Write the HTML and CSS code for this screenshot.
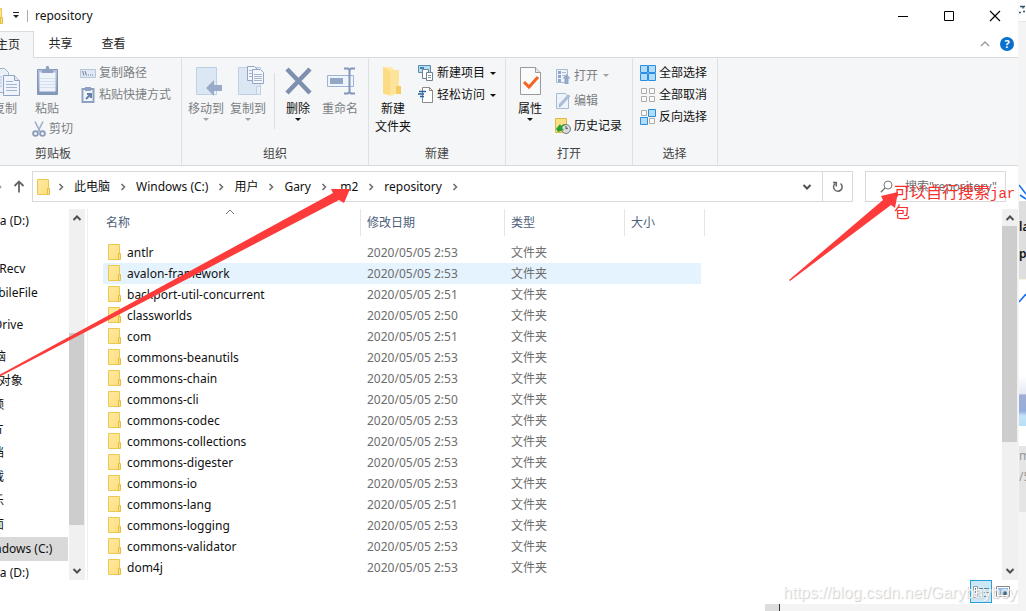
FILE: index.html
```html
<!DOCTYPE html>
<html lang="zh-CN">
<head>
<meta charset="utf-8">
<title>repository</title>
<link rel="stylesheet" href="styles.css">
</head>
<body>
<svg class="defs" aria-hidden="true">
  <linearGradient id="fold" x1="0" y1="0" x2="1" y2="1"><stop offset="0" stop-color="#ffe9a2"/><stop offset="1" stop-color="#fddf7d"/></linearGradient>
  <linearGradient id="steel" x1="0" y1="0" x2="0" y2="1"><stop offset="0" stop-color="#b5c3dc"/><stop offset="1" stop-color="#8296ba"/></linearGradient>
  <symbol id="folder" viewBox="0 0 14 16"><path d="M.5.5h11v15H.5z" fill="url(#fold)" stroke="#ecc850"/><path d="M10.500 9.500h2v6h-2z" fill="#fbe08a" stroke="#e5bd45"/></symbol>
  <symbol id="chev" viewBox="0 0 6 8"><path d="M1.500 1l3 3-3 3" fill="none" stroke="#707070" stroke-width="1.600"/></symbol>
  <symbol id="up" viewBox="0 0 10 8"><path d="M1.500 6L5 2.500 8.500 6" fill="none" stroke="#505050" stroke-width="2"/></symbol>
  <symbol id="down" viewBox="0 0 10 8"><path d="M1.500 2L5 5.500 8.500 2" fill="none" stroke="#505050" stroke-width="2"/></symbol>
  <symbol id="pages" viewBox="0 0 32 32"><path d="M3.500 2.500h12l4 4v20h-16z" fill="#e9f0f9" stroke="#9fb0cc"/><path d="M5 11h8m-8 3h8m-8 3h8m-8 3h8" stroke="#aebdd6"/><path d="M14.500 9.500h11l5 5v15h-16z" fill="#f1f5fb" stroke="#8fa3c4"/><path d="M25.500 9.500v5h5" fill="#dce5f2" stroke="#8fa3c4"/><path d="M17 15.500h7m-7 3h11m-11 3h11m-11 3h11" stroke="#a3b4d0"/></symbol>
</svg>
<div class="desktop">
  <main class="window">
    <header class="titlebar">
      <svg class="title-folder" width="14" height="16"><use href="#folder"/></svg>
      <button class="plain quick" aria-label="自定义快速访问工具栏"><svg width="8" height="7"><path d="M1 .5h6" stroke="#222"/><path d="M1 3h6L4 6z" fill="#222"/></svg></button>
      <h1 class="title">repository</h1>
      <div class="controls">
        <button class="plain" aria-label="最小化"><svg width="12" height="12"><path d="M1 6.500h10" stroke="#000"/></svg></button>
        <button class="plain" aria-label="最大化"><svg width="12" height="12"><path d="M1.500 1.500h9v9h-9z" fill="none" stroke="#000"/></svg></button>
        <button class="plain" aria-label="关闭"><svg width="12" height="12"><path d="M1 1l10 10M11 1L1 11" stroke="#000" stroke-width="1.200"/></svg></button>
      </div>
    </header>
    <nav class="tabs">
      <button class="tab active">主页</button>
      <button class="tab">共享</button>
      <button class="tab">查看</button>
      <div class="tab-tools">
        <button class="plain" aria-label="折叠功能区"><svg width="10" height="8"><path d="M1 6l4-4 4 4" fill="none" stroke="#9a9a9a" stroke-width="1.300"/></svg></button>
        <button class="plain help" aria-label="帮助">?</button>
      </div>
    </nav>
    <section class="ribbon">
      <div class="group clipboard">
        <div class="group-body">
          <button class="big off"><svg width="32" height="32"><use href="#pages"/></svg><span>复制</span></button>
          <div class="clip-right">
            <div class="clip-top">
              <button class="big off"><svg width="32" height="32"><path d="M6.500 3.500h20v25h-20z" fill="url(#steel)" stroke="#8496b8"/><path d="M8.500 6.500h16v19h-16z" fill="#eef3fa"/><path d="M9 12.500h15m-15 3h15m-15 3h15m-15 3h15" stroke="#d5dfed"/><path d="M11 3h3.500l1-3h2l1 3H22v4H11z" fill="#8fa1c0"/></svg><span>粘贴</span></button>
              <div class="stack">
                <button class="small off"><svg width="16" height="16"><path d="M.5 4.500h15v8H.5z" fill="#dfe8f4" stroke="#b7c5da"/><path d="M2.500 6l1.500 4.500M5 6l1.500 4.500M8 10h1m1 0h1m1 0h1" stroke="#6c7f9f"/></svg>复制路径</button>
                <button class="small off"><svg width="16" height="16"><path d="M2.500 2h11v13h-11z" fill="#f2f6fb" stroke="#8fa1c0" stroke-width="2"/><path d="M5 0h6v4H5z" fill="#8fa1c0"/><path d="M7 7h4v4M11 7l-5 5" stroke="#6680aa" stroke-width="2" fill="none"/></svg>粘贴快捷方式</button>
              </div>
            </div>
            <button class="small off cut"><svg width="16" height="16"><path d="M4 .5l5 10M12 .5l-5 10" stroke="#9cadc8" stroke-width="1.600"/><circle cx="4.500" cy="12.500" r="2.400" fill="none" stroke="#8b9cba" stroke-width="1.800"/><circle cx="11.500" cy="12.500" r="2.400" fill="none" stroke="#8b9cba" stroke-width="1.800"/></svg>剪切</button>
          </div>
        </div>
        <div class="group-name">剪贴板</div>
      </div>
      <div class="group organize">
        <div class="group-body">
          <button class="big off"><svg width="32" height="32"><path d="M6.500 1.500h20v27h-20z" fill="#dce7f4" stroke="#c0d0e4"/><path d="M22.500 22.500h4v6h-4z" fill="#e8eff8" stroke="#c0d0e4"/><path d="M16 22l8-8v5h8v6h-8v5z" fill="#9aabc9"/></svg><span>移动到</span><i class="drop"></i></button>
          <button class="big off"><svg width="32" height="32"><path d="M6.500 1.500h22v27h-22z" fill="#dce7f4" stroke="#c0d0e4"/><path d="M24.500 20.500h4v8h-4z" fill="#e8eff8" stroke="#c0d0e4"/><path d="M15.500.500h7l3 3v11h-10z" fill="#f3f7fc" stroke="#93a6c6"/><path d="M20.500 3.500h8l3 3v11h-11z" fill="#f3f7fc" stroke="#93a6c6"/><path d="M22 8.500h8m-8 2h8m-8 2h8m-8 2h8M17 4.500h3m-3 3h3m-3 3h3" stroke="#a7b6d0"/></svg><span>复制到</span><i class="drop"></i></button>
          <div class="rule"></div>
          <button class="big"><svg width="32" height="32"><path d="M5 3l23 24M28 3L5 27" stroke="#7e8fb0" stroke-width="4.500"/></svg><span>删除</span><i class="drop"></i></button>
          <button class="big off"><svg width="32" height="32"><path d="M3.500 9.500h26v11h-26z" fill="#eef4fb" stroke="#9fb3d2"/><path d="M6 12h13v6H6z" fill="#94a6c6"/><path d="M20 2.500h4l1.500 1.500L27 2.500h4M20 27.500h4l1.500-1.500 1.500 1.500h4M25.500 4v22" stroke="#8496ba" stroke-width="2" fill="none"/></svg><span>重命名</span></button>
        </div>
        <div class="group-name">组织</div>
      </div>
      <div class="group create">
        <div class="group-body">
          <button class="big"><svg width="32" height="32"><path d="M6 1h9l2 3v25l-3 1-8-2z" fill="#ffe9a6"/><path d="M6 1l7 4v24l-7-2z" fill="#fbdc84"/><path d="M13 4h9v24h-9z" fill="#fde49a"/><path d="M19 20h5v8h-5z" fill="#f6cd62"/></svg><span>新建<br>文件夹</span></button>
          <div class="stack">
            <button class="small"><svg width="16" height="16"><path d="M.5.500h12v7H.5z" fill="#b8dcf2" stroke="#5c8cae"/><path d="M2 2h4v2H2z" fill="#3e86b8"/><path d="M4.500 4.500h6v9h-6z" fill="#fff" stroke="#70818f"/><path d="M8.500 7.500h6v8h-6z" fill="#fff" stroke="#70818f"/><path d="M10 10.500h3m-3 2h3" stroke="#899"/></svg>新建项目<i class="drop"></i></button>
            <button class="small"><svg width="16" height="16"><path d="M4.500.5h7l3 3v12h-10z" fill="#fff" stroke="#8a8a8a"/><path d="M11.500.5v3h3" fill="none" stroke="#8a8a8a"/><path d="M1 4.500h7M0 7h6M2 9.500h4" stroke="#24639c" stroke-width="1.300"/></svg>轻松访问<i class="drop"></i></button>
          </div>
        </div>
        <div class="group-name">新建</div>
      </div>
      <div class="group open">
        <div class="group-body">
          <button class="big"><svg width="32" height="32"><path d="M6.500 1.500h15l5 5v22h-20z" fill="#fbfbfb" stroke="#9a9a9a"/><path d="M21.500 1.500v5h5" fill="#e8e8e8" stroke="#9a9a9a"/><path d="M10 16l5 5 9-10" fill="none" stroke="#f26522" stroke-width="3"/></svg><span>属性</span><i class="drop"></i></button>
          <div class="stack">
            <button class="small off"><svg width="16" height="16"><path d="M1.500 1.500h11v13h-11z" fill="#edf3fa" stroke="#a9b9d2"/><path d="M3 3h3v3H3zM3 7h3v3H3zM3 11h3v3H3z" fill="#91a5c7"/><path d="M7 4.500h4M7 7.500h3" stroke="#a9b9d2"/><path d="M11.500 6l4 4.500h-2V16h-4v-5.500H7.500z" fill="#95a8c9"/></svg>打开<i class="drop"></i></button>
            <button class="small off"><svg width="16" height="16"><path d="M1.500.5h9l3 3v12h-12z" fill="#edf3fa" stroke="#a9b9d2"/><path d="M15 3L6 13l-2 1 .5-3L13 2z" fill="#afc0db" stroke="#93a6c5" stroke-width=".6"/></svg>编辑</button>
            <button class="small"><svg width="16" height="16"><path d="M.5.500h11v14H.5z" fill="#fbe08a" stroke="#dfb944"/><circle cx="11" cy="11" r="4.500" fill="#d9dcdc" stroke="#777"/><path d="M11 8v3l2-1" stroke="#555" fill="none"/><path d="M1 11l4-5 1 2c2-2 4-2 5-1-3 0-4 2-4 3l2 2-6 2z" fill="#28a032"/></svg>历史记录</button>
          </div>
        </div>
        <div class="group-name">打开</div>
      </div>
      <div class="group select">
        <div class="group-body">
          <div class="stack">
            <button class="small"><svg width="16" height="16"><path d="M.5.500h7v7h-7zM8.500.500h7v7h-7zM.5 8.500h7v7h-7zM8.500 8.500h7v7h-7z" fill="#b2dcfa" stroke="#2b8fe0"/></svg>全部选择</button>
            <button class="small"><svg width="16" height="16"><path d="M1.500 1.500h5v5h-5zM9.500 1.500h5v5h-5zM1.500 9.500h5v5h-5zM9.500 9.500h5v5h-5z" fill="#fafafa" stroke="#adadad"/></svg>全部取消</button>
            <button class="small"><svg width="16" height="16"><path d="M1.500 1.500h5v5h-5zM9.500 9.500h5v5h-5z" fill="#fafafa" stroke="#adadad"/><path d="M8.500.500h7v7h-7zM.5 8.500h7v7h-7z" fill="#b2dcfa" stroke="#2b8fe0"/></svg>反向选择</button>
          </div>
        </div>
        <div class="group-name">选择</div>
      </div>
    </section>
    <section class="location">
      <svg width="3" height="8"><path d="M0 2.500l1 1.500-1 1.500" stroke="#888" fill="none"/></svg>
      <button class="plain go-up" aria-label="上移"><svg width="12" height="13"><path d="M6 12.500V2M1.500 6L6 1.500 10.500 6" fill="none" stroke="#666" stroke-width="1.800"/></svg></button>
      <div class="address">
        <svg width="14" height="16"><use href="#folder"/></svg>
        <div class="crumbs">
          <svg class="chev" width="6" height="8"><use href="#chev"/></svg>
          <a href="#pc">此电脑</a><svg class="chev" width="6" height="8"><use href="#chev"/></svg>
          <a href="#c">Windows (C:)</a><svg class="chev" width="6" height="8"><use href="#chev"/></svg>
          <a href="#users">用户</a><svg class="chev" width="6" height="8"><use href="#chev"/></svg>
          <a href="#gary">Gary</a><svg class="chev" width="6" height="8"><use href="#chev"/></svg>
          <a href="#m2">.m2</a><svg class="chev" width="6" height="8"><use href="#chev"/></svg>
          <a href="#repository">repository</a><svg class="chev" width="6" height="8"><use href="#chev"/></svg>
        </div>
        <button class="plain history" aria-label="以前的位置"><svg width="10" height="8"><use href="#down"/></svg></button>
        <button class="plain refresh" aria-label="刷新"><svg width="12" height="12"><path d="M8.500 2.500A4.300 4.300 0 1 1 3.500 2.300" fill="none" stroke="#666" stroke-width="1.500"/><path d="M1 1.500h3.300v4" fill="none" stroke="#666" stroke-width="1.500"/></svg></button>
      </div>
      <label class="search">
        <svg width="13" height="13"><circle cx="8" cy="5" r="4" fill="none" stroke="#777"/><path d="M5 8L.8 12.200" stroke="#777" stroke-width="1.300"/></svg>
        <input type="text" aria-label="搜索" placeholder="搜索&quot;repository&quot;">
      </label>
    </section>
    <section class="panes">
      <div class="tree-clip">
        <ul class="tree">
          <li class="sub">Data (D:)</li>
          <li class="empty"></li>
          <li class="sub">FileRecv</li>
          <li class="sub">MobileFile</li>
          <li class="root">OneDrive</li>
          <li class="root">此电脑</li>
          <li class="sub">3D 对象</li>
          <li class="sub">视频</li>
          <li class="sub">图片</li>
          <li class="sub">文档</li>
          <li class="sub">下载</li>
          <li class="sub">音乐</li>
          <li class="sub">桌面</li>
          <li class="sub current">Windows (C:)</li>
          <li class="sub">Data (D:)</li>
        </ul>
      </div>
      <div class="scroll tree-scroll">
        <svg width="10" height="8"><use href="#up"/></svg>
        <div class="track"><div class="thumb"></div></div>
        <svg width="10" height="8"><use href="#down"/></svg>
      </div>
      <div class="files">
        <table>
          <colgroup><col class="c-name"><col class="c-date"><col class="c-type"><col class="c-size"></colgroup>
          <thead><tr><th><svg class="sort" width="10" height="6"><path d="M1 5l4-4 4 4" fill="none" stroke="#777"/></svg>名称</th><th>修改日期</th><th>类型</th><th>大小</th></tr></thead>
          <tbody>
            <tr><td><svg width="14" height="16"><use href="#folder"/></svg>antlr</td><td>2020/05/05 2:53</td><td>文件夹</td><td></td></tr>
            <tr class="hover"><td><svg width="14" height="16"><use href="#folder"/></svg>avalon-framework</td><td>2020/05/05 2:53</td><td>文件夹</td><td></td></tr>
            <tr><td><svg width="14" height="16"><use href="#folder"/></svg>backport-util-concurrent</td><td>2020/05/05 2:51</td><td>文件夹</td><td></td></tr>
            <tr><td><svg width="14" height="16"><use href="#folder"/></svg>classworlds</td><td>2020/05/05 2:50</td><td>文件夹</td><td></td></tr>
            <tr><td><svg width="14" height="16"><use href="#folder"/></svg>com</td><td>2020/05/05 2:51</td><td>文件夹</td><td></td></tr>
            <tr><td><svg width="14" height="16"><use href="#folder"/></svg>commons-beanutils</td><td>2020/05/05 2:53</td><td>文件夹</td><td></td></tr>
            <tr><td><svg width="14" height="16"><use href="#folder"/></svg>commons-chain</td><td>2020/05/05 2:53</td><td>文件夹</td><td></td></tr>
            <tr><td><svg width="14" height="16"><use href="#folder"/></svg>commons-cli</td><td>2020/05/05 2:50</td><td>文件夹</td><td></td></tr>
            <tr><td><svg width="14" height="16"><use href="#folder"/></svg>commons-codec</td><td>2020/05/05 2:53</td><td>文件夹</td><td></td></tr>
            <tr><td><svg width="14" height="16"><use href="#folder"/></svg>commons-collections</td><td>2020/05/05 2:53</td><td>文件夹</td><td></td></tr>
            <tr><td><svg width="14" height="16"><use href="#folder"/></svg>commons-digester</td><td>2020/05/05 2:53</td><td>文件夹</td><td></td></tr>
            <tr><td><svg width="14" height="16"><use href="#folder"/></svg>commons-io</td><td>2020/05/05 2:53</td><td>文件夹</td><td></td></tr>
            <tr><td><svg width="14" height="16"><use href="#folder"/></svg>commons-lang</td><td>2020/05/05 2:51</td><td>文件夹</td><td></td></tr>
            <tr><td><svg width="14" height="16"><use href="#folder"/></svg>commons-logging</td><td>2020/05/05 2:53</td><td>文件夹</td><td></td></tr>
            <tr><td><svg width="14" height="16"><use href="#folder"/></svg>commons-validator</td><td>2020/05/05 2:53</td><td>文件夹</td><td></td></tr>
            <tr><td><svg width="14" height="16"><use href="#folder"/></svg>dom4j</td><td>2020/05/05 2:53</td><td>文件夹</td><td></td></tr>
          </tbody>
        </table>
      </div>
      <div class="scroll file-scroll">
        <svg width="10" height="8"><use href="#up"/></svg>
        <div class="track"><div class="thumb"></div></div>
        <svg width="10" height="8"><use href="#down"/></svg>
      </div>
    </section>
    <footer class="status">
      <button class="plain view on" aria-label="详细信息"><svg width="16" height="14"><path d="M.5 1.500h4v11h-4z" fill="#fff" stroke="#999"/><path d="M2 3h1v2H2zM2 6h1v2H2z" fill="#58a"/><path d="M2 9h1v2H2z" fill="#c33"/><path d="M6 3.500h4m1 0h5M6 7.500h4m1 0h5M6 11.500h4m1 0h5" stroke="#6d7f88"/></svg></button>
      <button class="plain view" aria-label="大图标"><svg width="14" height="12"><path d="M.5.500h13v10H.5z" fill="#fff" stroke="#888"/><path d="M2 2h10v4H2z" fill="#8fbcf0"/><path d="M2 5l4 1 6-1v4H2z" fill="#41657c"/></svg></button>
    </footer>
    <div class="under"><span></span></div>
  </main>
  <aside class="behind" aria-hidden="true">
    <div class="b-top"><svg width="7" height="14"><path d="M1 6.500h5M4 6.500v2M0 12.500h2M4 11.500h2" stroke="#356" stroke-width="1.500"/></svg></div>
    <div class="b-page"></div>
    <div class="b-lines"><svg width="7" height="16"><path d="M0 1l7 9M1 11l6 4" stroke="#1670f0" stroke-width="1.600"/></svg></div>
    <div class="b-text"><span>la</span><span>p</span></div>
    <div class="b-white"><svg width="7" height="12"><path d="M0 11l7-8" stroke="#1670f0" stroke-width="1.600"/></svg></div>
    <div class="b-photo"></div>
    <div class="b-gap"></div>
    <div class="b-grey"><span>m</span><span>/5</span></div>
  </aside>
  <svg class="arrows" width="1026" height="611" aria-hidden="true"><path d="M0 374.500L333 193l-2-4 19 0-6 14-5-3L0 376.500zM789 280l94-80-2-4 17-4-3 16-4-3-101 76z" fill="#fd3b3a"/></svg>
  <p class="note">可以自行搜索<span>jar</span><br>包</p>
  <p class="watermark">https://blog.csdn.net/Garybayboy</p>
</div>
</body>
</html>
```

FILE: styles.css
```css
* { box-sizing: border-box; }
body { margin: 0; font: 12px/16px "Noto Sans", "Noto Sans CJK SC", sans-serif; color: #111; background: #fff; }
svg { display: block; flex: none; }
.defs { position: absolute; width: 0; height: 0; }
button { font: inherit; color: inherit; border: 0; background: none; padding: 0; margin: 0; white-space: nowrap; }
.plain { display: flex; align-items: center; justify-content: center; }
.desktop { position: relative; display: flex; height: 100vh; min-height: 600px; overflow: hidden; }
.window { flex: 1; min-width: 0; display: flex; flex-direction: column; border-right: 1px solid #f4f4f4; }

.titlebar { display: flex; align-items: center; height: 31px; }
.title-folder { margin-left: -10px; }
.quick { width: 23px; }
.title { margin: 0; padding-left: 7px; border-left: 1px solid #aaa; font-size: 12px; line-height: 12px; font-weight: 400; }
.controls { display: flex; margin-left: auto; }
.controls button { width: 46px; height: 30px; }

.tabs { display: flex; height: 27px; border-bottom: 1px solid #dadbdc; }
.tab { width: 53px; height: 25px; color: #262626; }
.tab.active { width: 34px; height: 27px; padding-right: 13px; display: flex; justify-content: flex-end; align-items: center; background: #f5f6f7; border: 1px solid #dadbdc; border-width: 1px 1px 0 0; }
.tab-tools { display: flex; align-items: center; gap: 10px; margin-left: auto; padding-right: 4px; }
.help { width: 14px; height: 14px; border-radius: 7px; background: #0a70cc; color: #fff; font-weight: 700; font-size: 11px; line-height: 14px; }

.ribbon { display: flex; height: 108px; background: #f5f6f7; border-bottom: 1px solid #d9dadb; }
.group { display: flex; flex-direction: column; padding: 4px 3px 2px; border-right: 1px solid #e0e1e2; }
.group-body { flex: 1; display: flex; }
.group-name { text-align: center; line-height: 18px; color: #444; }
.big { width: 42px; padding-top: 4px; display: flex; flex-direction: column; align-items: center; line-height: 18px; }
.big span { padding-top: 2px; }
.off { color: #7b7f84; }
.drop { width: 0; height: 0; border: 3px solid transparent; border-top-color: currentColor; border-bottom: 0; }
.off .drop { opacity: .7; }
.small { display: flex; align-items: center; gap: 3px; height: 22px; }
.small .drop { margin-left: 2px; }
.rule { width: 1px; height: 56px; margin: 11px 2px 0 5px; background: #dcddde; }
.clipboard { width: 257px; margin-left: -75px; padding-left: 59px; }
.clipboard .group-name { padding-right: 56px; }
.clip-right { display: flex; flex-direction: column; }
.clip-top { display: flex; height: 56px; gap: 12px; }
.cut { margin-left: 5px; gap: 2px; }
.organize { width: 187px; }
.create { width: 137px; }
.create .stack { margin-left: 4px; }
.open { width: 127px; }
.open .stack { margin-left: 4px; padding-top: 1px; }
.open .small { height: 25px; }
.select { width: 85px; padding-left: 7px; padding-right: 8px; }

.location { display: flex; align-items: center; height: 43px; padding: 0 12px 2px 0; }
.go-up { width: 31px; height: 30px; margin-right: -2px; }
.address { flex: 1; display: flex; align-items: center; height: 31px; border: 1px solid #d9d9d9; padding-left: 4px; }
.crumbs { display: flex; align-items: center; flex: 1; padding-left: 7px; }
.crumbs a { color: #111; text-decoration: none; }
.chev { margin: 0 10px; }
.crumbs .chev:first-child { margin-left: 0; }
.history { width: 30px; height: 29px; }
.refresh { width: 30px; height: 29px; border-left: 1px solid #d9d9d9; }
.search { display: flex; align-items: center; width: 141px; height: 31px; margin-left: 12px; padding-left: 14px; gap: 12px; border: 1px solid #d9d9d9; }
.search input { flex: 1; min-width: 0; border: 0; padding: 0; outline: 0; background: none; font: inherit; }
.search input::placeholder { color: #6d6d6d; opacity: 1; }

.panes { flex: 1; min-height: 0; display: flex; }
.tree-clip { width: 69px; overflow: hidden; }
.tree { list-style: none; margin: 0 1px 0 -30px; padding: 0; line-height: 24px; white-space: nowrap; }
.tree .sub { padding-left: 10px; }
.tree .root { margin: 8px 0; }
.tree .root + .root { margin-bottom: 0; }
.empty { height: 24px; }
.tree .current { background: #d9d9d9; }
.scroll { display: flex; flex-direction: column; align-items: center; justify-content: space-between; width: 16px; padding: 5px 0; background: #f0f0f0; }
.track { flex: 1; align-self: stretch; margin: 4px 1px 4px 0; }
.thumb { background: #cdcdcd; }
.tree-scroll .track { padding-top: 107px; }
.tree-scroll .thumb { height: 192px; }
.file-scroll .thumb { height: 216px; }
.files { flex: 1; min-width: 0; overflow: hidden; margin-left: 2px; padding-left: 15px; border-left: 1px solid #f0f0f0; }
table { table-layout: fixed; width: 602px; border-collapse: separate; border-spacing: 0; }
.c-name { width: 258px; }
.c-date { width: 144px; }
.c-type { width: 120px; }
.c-size { width: 80px; }
th { position: relative; height: 27px; padding: 0 0 0 6px; text-align: left; font-weight: 400; color: #4c607a; border-right: 1px solid #e5e5e5; }
th:first-child { padding-left: 3px; }
.sort { position: absolute; left: 122px; top: 0; }
thead::after { content: ""; display: block; height: 6px; }
td { height: 21px; padding: 0 0 0 6px; line-height: 20px; color: #6d6d6d; white-space: nowrap; }
td:first-child { padding-left: 5px; color: #111; }
td svg { float: left; margin: 1px 5px 0 0; }
.hover td { background: #e5f3ff; }
.hover td:last-child { background: linear-gradient(#e5f3ff, #e5f3ff) 0 0 / calc(100% - 4px) 100% no-repeat; }

.status { display: flex; justify-content: flex-end; height: 24px; padding-right: 4px; }
.view { width: 22px; height: 23px; }
.view.on { background: #cce8f6; border: 1px solid #26a0da; }
.under { height: 7px; margin-left: 765px; background: #f4f4f4; }
.under span { display: block; width: 15px; height: 7px; background: #ddd; border-right: 1px solid #333; }

.behind { width: 7px; overflow: hidden; display: flex; flex-direction: column; background: #f4f4f4; }
.b-top { height: 22px; background: #fff; border-bottom: 1px solid #e6e6e6; }
.b-page { height: 162px; }
.b-lines { height: 17px; background: #fff; }
.b-text { height: 78px; padding-top: 18px; background: #dedede; font-weight: 600; }
.b-text span { display: block; height: 27px; }
.b-white { height: 97px; padding-top: 11px; background: #fff; border-top: 1px solid #fbf3dc; }
.b-photo { height: 50px; background: linear-gradient(#fff, #e6e9f5 35%, #a2aed3 38%, #93addb 70%, #c5e4f8 80%, #b5e0f6); }
.b-gap { height: 20px; background: #fff; }
.b-grey { height: 66px; padding-top: 2px; background: #e5e5e5; color: #999; }
.b-grey span { display: block; height: 21px; }

/* Annotations drawn over the window */
.arrows { position: absolute; left: 0; top: 0; pointer-events: none; }
.note { position: absolute; left: 894px; top: 182px; margin: 0; font: 16px/19px "Noto Sans CJK SC", sans-serif; color: #f5312e; white-space: nowrap; }
.note span { font: 14px/16px "Liberation Mono", monospace; }
.watermark { position: absolute; right: 9px; bottom: 9px; margin: 0; font: 16px/18px "Liberation Sans", sans-serif; color: rgba(255, 255, 255, .75); text-shadow: 1px 1px 1px #ccc; pointer-events: none; }
```
